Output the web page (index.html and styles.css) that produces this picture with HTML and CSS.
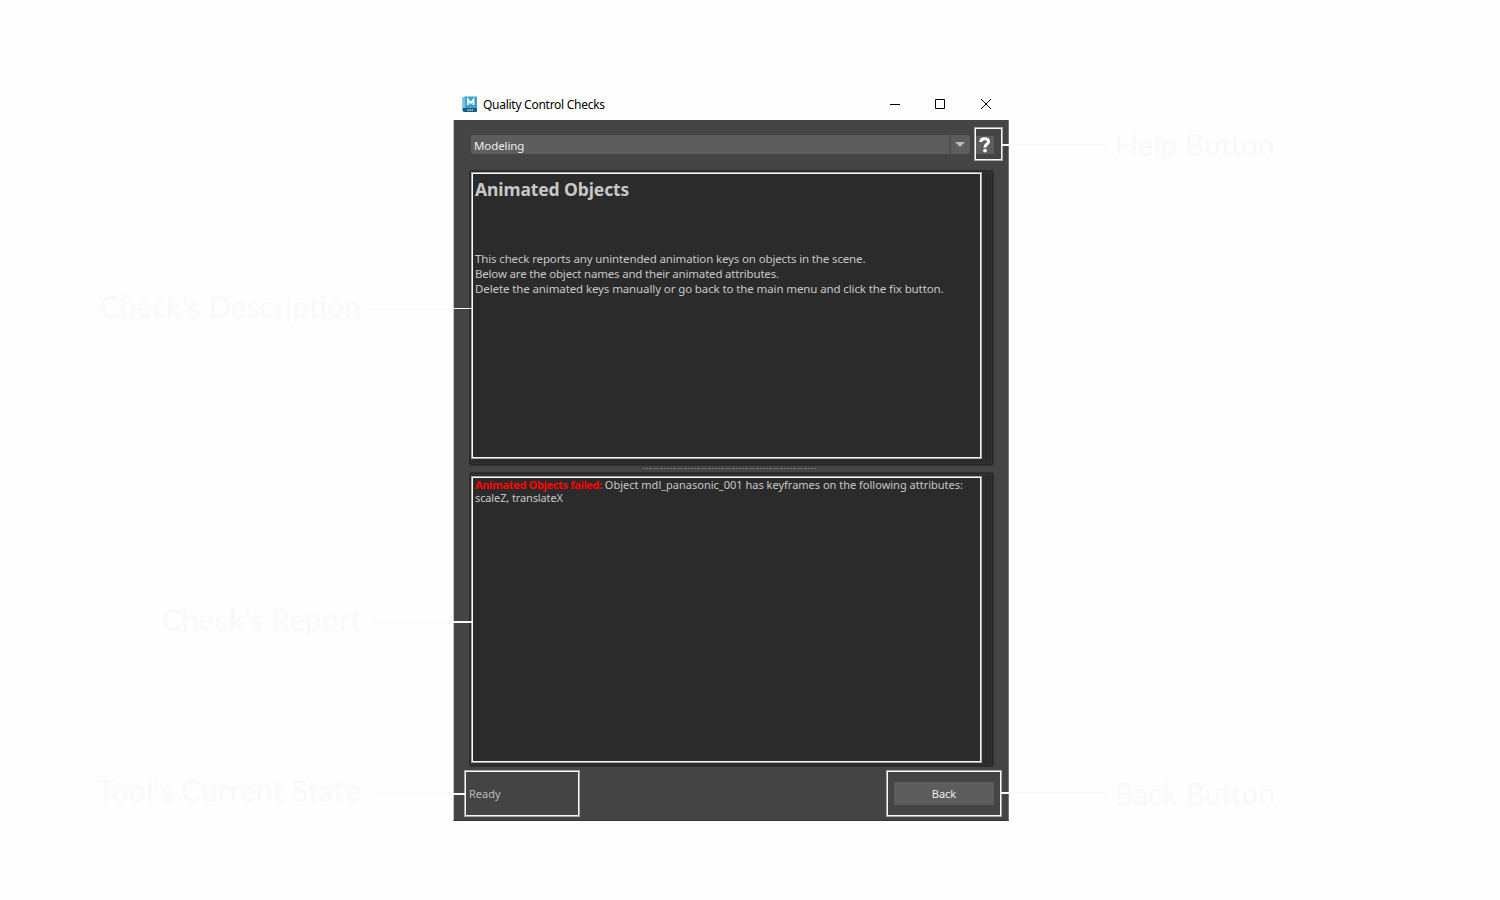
FILE: index.html
```html
<!DOCTYPE html>
<html lang="en">
<head>
<meta charset="utf-8">
<title>Quality Control Checks</title>
<link rel="stylesheet" href="styles.css">
</head>
<body>
<main class="stage">
  <aside class="notes notes-left">
    <div class="note note-description"><span>Check's Description</span></div>
    <div class="note note-report"><span>Check's Report</span></div>
    <div class="note note-state"><span>Tool's Current State</span></div>
  </aside>
  <section class="window">
    <header class="titlebar">
      <svg class="app-icon" width="16" height="17" viewBox="0 0 16 17">
        <path d="M.5 1.500L3 .5H14.500L15 1V12H.5Z" fill="#37a5cc"/>
        <path d="M.5 1.500L3 .5V12H.5Z" fill="#79c5df"/>
        <path d="M.5 12H15V15.500L14.500 16H2L.5 15Z" fill="#1b5b7c"/>
        <path d="M6 9V3.500L8.800 7L11.500 3.500V9" fill="none" stroke="#fff" stroke-width="1.700"/>
        <path d="M5.500 14H11.500" stroke="#b5d0dc" stroke-width="1.500" stroke-dasharray="1.500 .5"/>
      </svg>
      <h1 class="title">Quality Control Checks</h1>
      <svg class="controls" width="104" height="14" viewBox="0 0 104 14" fill="none" stroke="#000">
        <path d="M1 7.500H11"/>
        <path d="M46.500 2.500H55.500V11.500H46.500Z"/>
        <path d="M92 2L102 12M102 2L92 12"/>
      </svg>
    </header>
    <div class="body">
      <div class="toolbar">
        <div class="combo"><span class="combo-text">Modeling</span><span class="combo-arrow"></span></div>
        <div class="help">
          <svg width="12" height="16" viewBox="0 0 12 16" fill="none" stroke="#fff" stroke-width="3"><path d="M1.800 5C1.800 2.500 3.500 1.800 5.600 1.800C8 1.800 9.500 2.900 9.500 4.700C9.500 7.200 6 7 6 10.500"/><circle cx="6" cy="13.600" r="1.900" fill="#fff" stroke="none"/></svg>
          <i class="frame frame-help"></i><i class="lead lead-help"></i>
        </div>
      </div>
      <div class="panel">
        <h2 class="check-name">Animated Objects</h2>
        <p class="line l1">This check reports any unintended animation keys on objects in the scene.</p>
        <p class="line l2">Below are the object names and their animated attributes.</p>
        <p class="line l3">Delete the animated keys manually or go back to the main menu and click the fix button.</p>
        <i class="frame frame-top"></i><i class="lead lead-description"></i>
      </div>
      <div class="splitter"></div>
      <div class="panel report">
        <p class="line r1"><b>Animated Objects failed:</b> <span>Object mdl_panasonic_001 has keyframes on the following attributes:</span></p>
        <p class="line r2">scaleZ, translateX</p>
        <i class="frame frame-bottom"></i><i class="lead lead-report"></i>
      </div>
      <footer class="footer">
        <div class="status">Ready<i class="frame frame-status"></i><i class="lead lead-state"></i></div>
        <div class="back">Back<i class="frame frame-back"></i><i class="lead lead-back"></i></div>
      </footer>
    </div>
  </section>
  <aside class="notes notes-right">
    <div class="note note-help"><span>Help Button</span></div>
    <div class="note note-back"><span>Back Button</span></div>
  </aside>
</main>
</body>
</html>
```
FILE: styles.css
```css
* { box-sizing: border-box; }
body { margin: 0; background: #fefefe; font-family: "Noto Sans", sans-serif; font-size: 11px; }
h1, h2, p { margin: 0; }
.stage { display: grid; grid-template-columns: 453px 556px 1fr; height: 900px; overflow: hidden; }

.notes { display: flex; flex-direction: column; font: 30px/40px Lato, sans-serif; color: #f9f9f9; white-space: nowrap; }
.notes-left { align-items: flex-end; padding: 286px 92px 0 0; }
.notes-right { padding: 124px 0 0 106px; }
.note-report { margin-top: 273px; letter-spacing: .1px; }
.note-state { margin-top: 131px; letter-spacing: .3px; }
.note-back { margin-top: 609px; margin-left: -1px; }

.window { padding-top: 88px; }
.titlebar { display: flex; align-items: center; height: 32px; padding: 0 16px 0 9px; }
.title { margin: 2px 0 0 5px; font-size: 12px; line-height: 16px; font-weight: 400; color: #000; letter-spacing: -.27px; }
.app-icon { flex: none; }
.controls { margin-left: auto; }
.body { height: 701px; padding: 15px 14px 0 16px; background: #444; border: 1px solid #777; border-width: 0 1px 1px; border-left-color: #c8c8c8; border-bottom-color: #333; }

.toolbar { display: flex; padding-left: 1px; height: 35px; }
.combo { display: flex; width: 499px; height: 19px; background: #5d5d5d; border-radius: 2px; }
.combo-text { flex: 1; padding-left: 3px; line-height: 22px; font-size: 11.5px; color: #eee; letter-spacing: -.1px; }
.combo-arrow { display: flex; align-items: center; justify-content: center; width: 21px; padding-right: 2px; border-left: 2px solid #505050; }
.combo-arrow::before { content: ""; border: 5px solid transparent; border-top-color: #bbb; border-bottom: 0; }
.help { position: relative; width: 18px; height: 18px; margin: 1px 0 0 6px; padding: 1px 0 0 3px; background: #5d5d5d; }
.help svg { display: block; }

.panel { position: relative; width: 525px; height: 296px; margin-left: -1px; padding: 6px 5px; background: #2b2b2b; border: 1px solid #303030; border-radius: 3px; color: #c8c8c8; box-shadow: inset 0 0 0 1px #272727, inset 0 0 0 2px #333; }
.check-name { height: 74px; font-size: 17.500px; line-height: 24px; letter-spacing: -.1px; }
.line { line-height: 15px; height: 15px; font-size: 11.5px; white-space: nowrap; }
.l1 { letter-spacing: -.14px; }
.l2 { letter-spacing: -.19px; }
.l3 { letter-spacing: -.11px; }
.splitter { width: 174px; height: 6px; margin-left: 173px; background: repeating-linear-gradient(90deg, #777 0 2px, transparent 2px 3px) 0 2px / 100% 1px no-repeat; }
.report { height: 295px; padding-top: 5px; }
.r1, .r2 { line-height: 13px; height: 13px; font-size: 11px; }
.r1 b { color: #f00; letter-spacing: -.33px; }
.r2 { letter-spacing: -.12px; }
.footer { display: flex; justify-content: space-between; padding-top: 15px; }
.status { position: relative; margin-left: -1px; width: 100px; line-height: 24px; color: #bbb; }
.back { position: relative; width: 100px; height: 23px; background: #5d5d5d; line-height: 24px; text-align: center; color: #eee; }

.frame { position: absolute; border: 1px solid #a8a8a8; box-shadow: inset 0 0 0 1px #f9f9f9; }
.frame-help { left: -2px; top: -9px; width: 29px; height: 34px; }
.frame-top, .frame-bottom { left: 1px; top: 1px; width: 511px; height: 287px; }
.frame-bottom { top: 3px; }
.frame-status { left: -5px; top: -12px; width: 116px; height: 47px; }
.frame-back { left: -8px; top: -12px; width: 116px; height: 47px; }
.lead { position: absolute; height: 2px; background: #f9f9f9; }
.lead-help { left: 26px; top: 8px; width: 105px; }
.lead-description { left: -103px; top: 137px; width: 105px; height: 1px; }
.lead-report { left: -99px; top: 148px; width: 101px; }
.lead-state { left: -99px; top: 11px; width: 95px; }
.lead-back { left: 107px; top: 10px; width: 106px; }
```
